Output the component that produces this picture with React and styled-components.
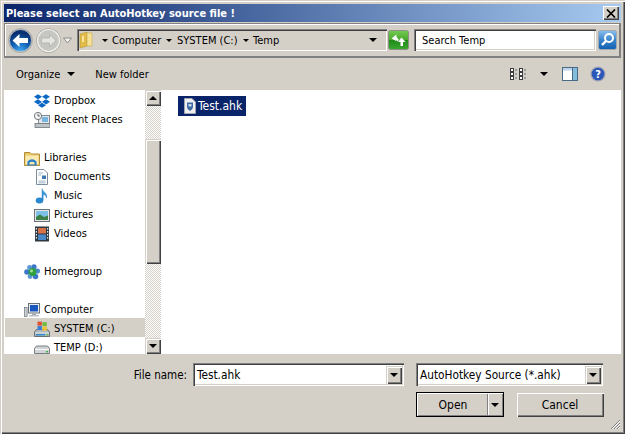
import React from "react";
import styled, { createGlobalStyle, css } from "styled-components";
import { FaDropbox } from "react-icons/fa";

const Global = createGlobalStyle`
  html, body { margin: 0; padding: 0; background: #d4d0c8; }
  * { box-sizing: border-box; }
`;

const raised = css`
  background: #d4d0c8;
  box-shadow: inset 1px 1px 0 #d4d0c8, inset 2px 2px 0 #fff, inset -1px -1px 0 #404040, inset -2px -2px 0 #808080;
`;
const sunken = css`
  background: #fff;
  box-shadow: inset 1px 1px 0 #808080, inset 2px 2px 0 #404040, inset -1px -1px 0 #fff, inset -2px -2px 0 #d4d0c8;
`;

const Window = styled.div`
  position: relative;
  width: 625px;
  height: 434px;
  padding: 4px;
  display: flex;
  flex-direction: column;
  overflow: hidden;
  font-family: "DejaVu Sans Condensed", "DejaVu Sans", sans-serif;
  font-stretch: condensed;
  font-size: 11px;
  color: #000;
  ${raised}
`;
const TitleBar = styled.div`
  height: 18px;
  flex: none;
  display: flex;
  align-items: center;
  justify-content: space-between;
  padding: 0 2px;
  background: linear-gradient(90deg, #0a246a, #a6caf0);
  color: #fff;
  font-weight: 700;
  font-size: 11px;
`;
const CloseBtn = styled.div`
  width: 16px;
  height: 14px;
  display: flex;
  align-items: center;
  justify-content: center;
  box-shadow: inset 1px 1px 0 #fff, inset -1px -1px 0 #404040, inset -2px -2px 0 #808080;
  background: #d4d0c8;
`;
const NavBar = styled.div`
  flex: none;
  height: 35px;
  margin-top: 1px;
  display: flex;
  align-items: center;
  padding: 0 3px;
  border-style: solid;
  border-color: #808080;
  border-width: 1px 2px 2px 1px;
  box-shadow: inset 1px 1px 0 #fff;
  font-size: 11px;
`;
const Chevron = styled.div`
  width: 9px;
  margin-left: 2px;
  flex: none;
  display: flex;
`;
const AddressBox = styled.div`
  ${sunken}
  width: 310px;
  height: 22px;
  margin-left: 5px;
  flex: none;
  display: flex;
  align-items: center;
  padding: 0 10px 0 2px;
  background: #d4d0c8;
`;
const Caret = styled.span`
  flex: none;
  width: 0;
  height: 0;
  border-left: 4px solid transparent;
  border-right: 4px solid transparent;
  border-top: 4px solid #000;
  margin-left: ${(p) => p.$left || 0}px;
`;
const CrumbCaret = styled.span`
  flex: none;
  width: 0;
  height: 0;
  border-left: 3px solid transparent;
  border-right: 3px solid transparent;
  border-top: 3px solid #000;
  margin-left: ${(p) => p.$left || 0}px;
`;
const Crumb = styled.span`
  margin-left: ${(p) => p.$left}px;
  white-space: nowrap;
  width: ${(p) => p.$w}px;
  flex: none;
`;
const Push = styled.div`
  flex: 1;
`;
const GoButton = styled.div`
  width: 21px;
  height: 20px;
  margin-left: 1px;
  flex: none;
  display: flex;
`;
const SearchField = styled.div`
  ${sunken}
  width: 182px;
  height: 22px;
  margin-left: 5px;
  flex: none;
  display: flex;
  align-items: center;
  padding-left: 8px;
`;
const SearchBtn = styled.div`
  width: 19px;
  height: 20px;
  margin-left: 2px;
  flex: none;
  display: flex;
`;
const Toolbar = styled.div`
  flex: none;
  height: 32px;
  display: flex;
  align-items: center;
  padding: 0 15px 0 12px;
  font-size: 11px;
`;
const ToolText = styled.span`
  margin-left: ${(p) => p.$left || 0}px;
  white-space: nowrap;
`;
const ToolIcon = styled.span`
  display: flex;
  margin-left: ${(p) => p.$left || 0}px;
`;
const Main = styled.div`
  flex: none;
  height: 264px;
  display: flex;
  background: #fff;
`;
const Sidebar = styled.div`
  width: 141px;
  flex: none;
  height: 264px;
  overflow: hidden;
  padding-left: 1px;
`;
const TreeRow = styled.div`
  height: 19px;
  display: flex;
  align-items: center;
  gap: 4px;
  padding-top: 2px;
  padding-left: ${(p) => (p.$child ? 29 : 19)}px;
  background: ${(p) => (p.$selected ? "#d4d0c8" : "transparent")};
  white-space: nowrap;
`;
const Scrollbar = styled.div`
  width: 16px;
  flex: none;
  display: flex;
  flex-direction: column;
  background: repeating-conic-gradient(#d4d0c8 0 25%, #fff 0 50%) 0 0 / 2px 2px;
`;
const ScrollBtn = styled.div`
  ${raised}
  height: 16px;
  flex: none;
  display: flex;
  align-items: center;
  justify-content: center;
`;
const CaretUp = styled.span`
  width: 0;
  height: 0;
  border-left: 4px solid transparent;
  border-right: 4px solid transparent;
  border-bottom: 4px solid #000;
`;
const Track = styled.div`
  height: ${(p) => p.$h}px;
  flex: none;
`;
const Thumb = styled.div`
  ${raised}
  height: 125px;
  flex: none;
`;
const Files = styled.div`
  flex: 1;
  padding: 6px 0 0 17px;
`;
const FileItem = styled.div`
  width: 68px;
  height: 20px;
  background: #0a246a;
  color: #fff;
  display: flex;
  align-items: center;
  gap: 1px;
  padding-left: 5px;
  font-size: 12px;
`;
const Bottom = styled.div`
  flex: 1;
  padding-top: 9px;
`;
const ComboRow = styled.div`
  display: flex;
  justify-content: flex-end;
  align-items: center;
  padding-right: 18px;
`;
const Label = styled.span`
  margin-right: 6px;
  font-size: 11.5px;
`;
const Combo = styled.div`
  ${sunken}
  width: ${(p) => p.$w}px;
  height: 23px;
  margin-left: ${(p) => p.$left || 0}px;
  display: flex;
  align-items: center;
  justify-content: space-between;
  padding: 1px 2px 0 4px;
  font-size: 11.75px;
`;
const ComboBtn = styled.div`
  ${raised}
  width: 16px;
  height: 18px;
  margin-top: -1px;
  display: flex;
  align-items: center;
  justify-content: center;
`;
const ButtonRow = styled.div`
  display: flex;
  justify-content: flex-end;
  gap: 12px;
  padding-right: 17px;
  margin-top: 6px;
`;
const OpenBtn = styled.div`
  ${raised}
  width: 88px;
  height: 25px;
  display: flex;
  outline: 1px solid #000;
  outline-offset: -1px;
  font-size: 12px;
`;
const OpenLabel = styled.div`
  flex: 1;
  display: flex;
  align-items: center;
  justify-content: center;
  padding-left: 3px;
`;
const OpenArrow = styled.div`
  width: 15px;
  margin: 2px 2px 2px 0;
  display: flex;
  align-items: center;
  justify-content: center;
  border-left: 1px solid #808080;
  box-shadow: inset 1px 0 0 #fff;
`;
const CancelBtn = styled.div`
  ${raised}
  width: 88px;
  height: 25px;
  display: flex;
  align-items: center;
  justify-content: center;
  font-size: 12px;
`;
const Grip = styled.svg`
  position: absolute;
  right: 4px;
  bottom: 4px;
  width: 12px;
  height: 12px;
`;

const I16 = ({ children, w = 16, h = 16 }) => (
  <svg width={w} height={h} viewBox={`0 0 ${w} ${h}`} style={{ flex: "none" }}>
    {children}
  </svg>
);

const CloseIcon = () => (
  <svg width="10" height="9" viewBox="0 0 10 9">
    <path d="M1 0.5L9 8.5M9 0.5L1 8.5" stroke="#000" strokeWidth="1.7" />
  </svg>
);
const BackBtn = () => (
  <svg width="25" height="25" viewBox="0 0 25 25" style={{ flex: "none" }}>
    <defs>
      <radialGradient id="bk" cx="50%" cy="95%" r="80%">
        <stop offset="0" stopColor="#3ea6ee" />
        <stop offset="0.55" stopColor="#0f5cb0" />
        <stop offset="1" stopColor="#0a2f70" />
      </radialGradient>
    </defs>
    <circle cx="12.5" cy="12.5" r="12.3" fill="#a8a8a4" />
    <circle cx="12.5" cy="12.5" r="11" fill="url(#bk)" stroke="#dcdcd8" strokeWidth="0.7" />
    <path d="M4.5 12.5L11.5 6V10H20V15H11.5V19Z" fill="#fff" />
  </svg>
);
const FwdBtn = () => (
  <svg width="25" height="25" viewBox="0 0 25 25" style={{ flex: "none", marginLeft: 3 }}>
    <circle cx="12.5" cy="12.5" r="12.3" fill="#a8a8a4" />
    <circle cx="12.5" cy="12.5" r="11" fill="#c6c6c2" stroke="#f0f0ec" strokeWidth="1.2" />
    <path d="M20 12.5L13.5 6.5V10H5.5V15H13.5V18.5Z" fill="#e4e4e0" stroke="#a4a4a0" strokeWidth="0.6" />
  </svg>
);
const ChevronIcon = () => (
  <svg width="9" height="7" viewBox="0 0 9 7">
    <path d="M0.5 1L4.5 6L8.5 1Z" fill="#f0f0ee" stroke="#8c8c88" />
  </svg>
);
const AddrFolder = () => (
  <I16 w={14} h={18}>
    <path d="M1 3L8 1V15L1 17Z" fill="#e2bc48" stroke="#b89838" strokeWidth="0.6" />
    <path d="M8 2H13V15H8Z" fill="#f6e296" stroke="#c8a848" strokeWidth="0.6" />
    <path d="M4 5V11" stroke="#fff0b8" strokeWidth="1.5" />
  </I16>
);
const GoIcon = () => (
  <svg width="21" height="20" viewBox="0 0 21 20">
    <defs>
      <linearGradient id="go" x1="0" y1="0" x2="0" y2="1">
        <stop offset="0" stopColor="#74cc52" />
        <stop offset="0.5" stopColor="#4aa82c" />
        <stop offset="0.51" stopColor="#1f8a18" />
        <stop offset="1" stopColor="#3aa830" />
      </linearGradient>
    </defs>
    <rect x="0.5" y="0.5" width="20" height="19" rx="2" fill="url(#go)" stroke="#909088" />
    <path d="M3.5 8.5L8.5 4.5V7L11 10L9 11.5L7.5 9L8 11Z" fill="#fff" />
    <path d="M13.5 7.5L17.5 12H15V16H12.5V12H10Z" fill="#fff" />
  </svg>
);
const SearchIcon = () => (
  <svg width="19" height="20" viewBox="0 0 19 20">
    <defs>
      <linearGradient id="sr" x1="0" y1="0" x2="0" y2="1">
        <stop offset="0" stopColor="#8cc0ec" />
        <stop offset="0.5" stopColor="#3a84cc" />
        <stop offset="1" stopColor="#1060b0" />
      </linearGradient>
    </defs>
    <rect x="0.5" y="0.5" width="18" height="19" rx="2" fill="url(#sr)" stroke="#a0a8b0" />
    <circle cx="11" cy="8" r="4" fill="none" stroke="#fff" strokeWidth="2" />
    <path d="M8 11L4 15" stroke="#fff" strokeWidth="2.4" />
  </svg>
);
const ViewsIcon = () => (
  <I16 h={13}>
    {[1, 5, 9].map((y) => (
      <React.Fragment key={y}>
        <rect x="0.5" y={y - 0.5} width="3" height="3" fill="#fff" stroke="#3c3c3c" />
        <path d={`M5 ${y + 1}H7`} stroke="#5a6a7a" />
        <rect x="9.5" y={y - 0.5} width="3" height="3" fill="#fff" stroke="#3c3c3c" />
        <path d={`M14 ${y + 1}H16`} stroke="#5a6a7a" />
      </React.Fragment>
    ))}
  </I16>
);
const PaneIcon = () => (
  <I16 h={14}>
    <rect x="0.5" y="0.5" width="15" height="13" fill="#fff" stroke="#4a6a8a" />
    <rect x="1" y="1" width="14" height="2.5" fill="#c0d4e8" />
    <rect x="10" y="1" width="5" height="12" fill="#84bcdc" />
    <path d="M10.5 1V13" stroke="#4a6a8a" />
  </I16>
);
const HelpIcon = () => (
  <I16>
    <circle cx="8" cy="8" r="7.6" fill="#a4a4b4" />
    <circle cx="8" cy="8" r="6.3" fill="#2a58b8" />
    <text x="8" y="12" textAnchor="middle" fontSize="11" fontWeight="700" fill="#fff" fontFamily="DejaVu Sans">?</text>
  </I16>
);
const RecentIcon = () => (
  <I16>
    <rect x="4.5" y="3.5" width="11" height="8" fill="#e4e8ea" stroke="#80888c" />
    <rect x="8" y="5" width="6" height="5" fill="#78b4e0" />
    <rect x="1" y="11.5" width="15" height="4" fill="#bcc2c6" stroke="#70787c" strokeWidth="0.8" />
    <circle cx="4" cy="4" r="3.6" fill="#f6f6f6" stroke="#70787c" />
    <path d="M4 1.8V4H6" stroke="#444" strokeWidth="0.8" fill="none" />
  </I16>
);
const LibIcon = () => (
  <I16>
    <path d="M0.5 2.5H6L7.5 4H15.5V15.5H0.5Z" fill="#eac868" stroke="#b08c38" />
    <path d="M1.5 5.5H14.5V14.5H1.5Z" fill="#fbeab0" />
    <path d="M3.5 15V11.5Q8 7 12.5 11.5V15H10.5V12.5Q8 11 5.5 12.5V15Z" fill="#2a80c8" />
    <path d="M3 15H13" stroke="#2a80c8" />
  </I16>
);
const DocIcon = () => (
  <I16>
    <path d="M2.5 0.5H10L13.5 4V15.5H2.5Z" fill="#fdfdfd" stroke="#7c8c9c" />
    <path d="M4.5 4H9M4.5 12H11.5M4.5 13.8H11.5M4.5 6H7" stroke="#9cb4c8" />
    <rect x="8" y="6.5" width="4" height="3.5" fill="#3a78b0" />
  </I16>
);
const MusicIcon = () => (
  <I16>
    <ellipse cx="5.5" cy="12.5" rx="3.8" ry="3" fill="#2a88d0" />
    <path d="M8 12V0.5C8.5 4 14 5 12.5 10C12 7.5 10.5 6.5 9.2 6.5V12Z" fill="#3a98dc" stroke="#2070b8" strokeWidth="0.4" />
  </I16>
);
const PicIcon = () => (
  <I16>
    <rect x="0.5" y="2.5" width="15" height="12" fill="#e8e8e8" stroke="#687078" />
    <rect x="2" y="4" width="12" height="9" fill="#7cc0e8" />
    <path d="M2 10L6 7.5L10 10L14 8.5V13H2Z" fill="#3c8048" />
  </I16>
);
const VideoIcon = () => (
  <I16>
    <rect x="1" y="0.5" width="14" height="15" fill="#303840" />
    <rect x="4" y="2" width="8" height="5.5" fill="#d87048" />
    <rect x="4" y="8.5" width="8" height="5.5" fill="#4888c8" />
    {[2, 5, 8, 11].map((y) => (
      <React.Fragment key={y}>
        <rect x="1.8" y={y} width="1.2" height="1.6" fill="#d8e0e8" />
        <rect x="13" y={y} width="1.2" height="1.6" fill="#d8e0e8" />
      </React.Fragment>
    ))}
  </I16>
);
const HomeIcon = () => (
  <I16>
    <circle cx="3" cy="8" r="2.8" fill="#3a78c8" />
    <circle cx="5.5" cy="3.5" r="2.4" fill="#5a98d8" />
    <circle cx="10" cy="2.8" r="2.6" fill="#3a78c8" />
    <circle cx="13.4" cy="7" r="2.6" fill="#4a88d0" />
    <circle cx="11.5" cy="12.5" r="2.8" fill="#3a78c8" />
    <circle cx="6" cy="12.5" r="2.4" fill="#5a98d8" />
    <circle cx="8.5" cy="8" r="3.9" fill="#2fa040" />
    <circle cx="7.5" cy="7" r="1.4" fill="#a8e0a0" />
  </I16>
);
const ComputerIcon = () => (
  <I16>
    <rect x="0.5" y="5.5" width="2.6" height="9" fill="#d0d4d8" stroke="#687078" strokeWidth="0.7" />
    <rect x="4.5" y="1.5" width="11" height="9.5" fill="#e8ecf0" stroke="#687078" />
    <rect x="6" y="3" width="8" height="6.5" fill="#1a58c0" />
    <rect x="8" y="11.5" width="4" height="2" fill="#a0a8b0" />
    <rect x="5" y="13" width="10" height="1.6" fill="#c0c4c8" />
  </I16>
);
const SysIcon = () => (
  <I16>
    <path d="M0.5 11L2.5 8.5H13.5L15.5 11V15.5H0.5Z" fill="#aeb8bc" stroke="#505a5e" strokeWidth="0.8" />
    <path d="M1 12H15" stroke="#e8ecee" />
    <rect x="2" y="13" width="9" height="1.4" fill="#2a8ad0" />
    <rect x="12.5" y="13" width="1.6" height="1.4" fill="#60c040" />
    <rect x="3.5" y="0.6" width="4.4" height="4" fill="#e05030" />
    <rect x="8.4" y="1.2" width="4.4" height="4" fill="#70b840" />
    <rect x="3.5" y="5" width="4.4" height="4" fill="#3a80d8" />
    <rect x="8.4" y="5.6" width="4.4" height="4" fill="#f0c030" />
  </I16>
);
const DriveIcon = () => (
  <I16>
    <path d="M0.5 8.5L2.5 6H13.5L15.5 8.5V13.5H0.5Z" fill="#d0d4d6" stroke="#5c6468" strokeWidth="0.8" />
    <path d="M1 9.5H15" stroke="#f4f6f8" />
    <rect x="12" y="11" width="2" height="1.4" fill="#40b040" />
  </I16>
);
const FileIcon = () => (
  <I16 w={14}>
    <path d="M1.5 0.5H9L12.5 4V15.5H1.5Z" fill="#f0f0f0" stroke="#a0a8b0" />
    <path d="M4 4.5H10V9Q10 11.5 7 13Q4 11.5 4 9Z" fill="#3a6aa0" />
    <rect x="5.5" y="6" width="3" height="2.5" fill="#c8d8e8" />
  </I16>
);

const tree = [
  { label: "Dropbox", icon: <FaDropbox size={16} color="#0a68c4" />, child: true },
  { label: "Recent Places", icon: <RecentIcon />, child: true },
  {},
  { label: "Libraries", icon: <LibIcon /> },
  { label: "Documents", icon: <DocIcon />, child: true },
  { label: "Music", icon: <MusicIcon />, child: true },
  { label: "Pictures", icon: <PicIcon />, child: true },
  { label: "Videos", icon: <VideoIcon />, child: true },
  {},
  { label: "Homegroup", icon: <HomeIcon /> },
  {},
  { label: "Computer", icon: <ComputerIcon /> },
  { label: "SYSTEM (C:)", icon: <SysIcon />, child: true, selected: true },
  { label: "TEMP (D:)", icon: <DriveIcon />, child: true },
];

export default function App() {
  return (
    <>
      <Global />
      <Window>
        <TitleBar>
          <span>Please select an AutoHotkey source file !</span>
          <CloseBtn>
            <CloseIcon />
          </CloseBtn>
        </TitleBar>
        <NavBar>
          <BackBtn />
          <FwdBtn />
          <Chevron>
            <ChevronIcon />
          </Chevron>
          <AddressBox>
            <AddrFolder />
            <CrumbCaret $left={9} />
            <Crumb $left={4} $w={47}>Computer</Crumb>
            <CrumbCaret $left={7} />
            <Crumb $left={5} $w={59}>SYSTEM (C:)</Crumb>
            <CrumbCaret $left={7} />
            <Crumb $left={4} $w={30}>Temp</Crumb>
            <Push />
            <Caret />
          </AddressBox>
          <GoButton>
            <GoIcon />
          </GoButton>
          <SearchField>Search Temp</SearchField>
          <SearchBtn>
            <SearchIcon />
          </SearchBtn>
        </NavBar>
        <Toolbar>
          <ToolText>Organize</ToolText>
          <Caret $left={7} />
          <ToolText $left={20}>New folder</ToolText>
          <Push />
          <ToolIcon>
            <ViewsIcon />
          </ToolIcon>
          <Caret $left={14} />
          <ToolIcon $left={14}>
            <PaneIcon />
          </ToolIcon>
          <ToolIcon $left={12}>
            <HelpIcon />
          </ToolIcon>
        </Toolbar>
        <Main>
          <Sidebar>
            {tree.map((t, i) => (
              <TreeRow key={i} $child={t.child} $selected={t.selected}>
                {t.icon}
                {t.label}
              </TreeRow>
            ))}
          </Sidebar>
          <Scrollbar>
            <ScrollBtn>
              <CaretUp />
            </ScrollBtn>
            <Track $h={33} />
            <Thumb />
            <Track $h={74} />
            <ScrollBtn>
              <Caret />
            </ScrollBtn>
          </Scrollbar>
          <Files>
            <FileItem>
              <FileIcon />
              Test.ahk
            </FileItem>
          </Files>
        </Main>
        <Bottom>
          <ComboRow>
            <Label>File name:</Label>
            <Combo $w={211}>
              Test.ahk
              <ComboBtn>
                <Caret />
              </ComboBtn>
            </Combo>
            <Combo $w={187} $left={12}>
              AutoHotkey Source (*.ahk)
              <ComboBtn>
                <Caret />
              </ComboBtn>
            </Combo>
          </ComboRow>
          <ButtonRow>
            <OpenBtn>
              <OpenLabel>Open</OpenLabel>
              <OpenArrow>
                <Caret />
              </OpenArrow>
            </OpenBtn>
            <CancelBtn>Cancel</CancelBtn>
          </ButtonRow>
        </Bottom>
        <Grip viewBox="0 0 12 12">
          <path d="M11 2L2 11M11 5L5 11M11 8L8 11" stroke="#808080" strokeWidth="1" />
          <path d="M11 3L3 11M11 6L6 11M11 9L9 11" stroke="#fff" strokeWidth="1" />
        </Grip>
      </Window>
    </>
  );
}
